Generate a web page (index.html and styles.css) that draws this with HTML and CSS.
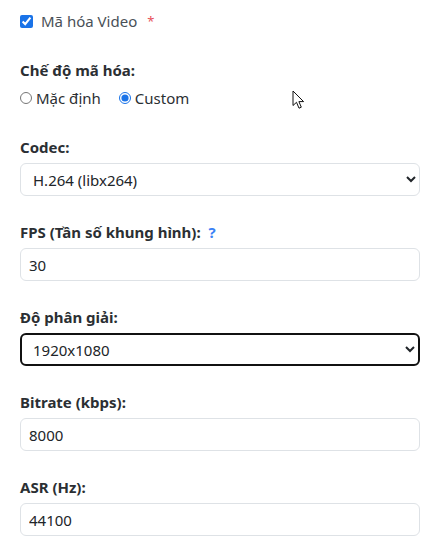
FILE: index.html
```html
<!DOCTYPE html>
<html lang="vi">
<head>
<meta charset="utf-8">
<title>Mã hóa Video</title>
<link rel="stylesheet" href="styles.css">
</head>
<body>
<form class="form">
  <label class="check-row">
    <input type="checkbox" class="check" checked>
    <span class="check-text">Mã hóa Video</span>
    <span class="req">*</span>
  </label>

  <div class="group">
    <div class="field-label mode-label">Chế độ mã hóa:</div>
    <div class="radio-row">
      <label class="radio-item"><input type="radio" name="mode" class="radio"><span>Mặc định</span></label>
      <label class="radio-item"><input type="radio" name="mode" class="radio" checked><span>Custom</span></label>
    </div>
  </div>

  <div class="group">
    <div class="field-label">Codec:</div>
    <select class="control select">
      <option>H.264 (libx264)</option>
    </select>
  </div>

  <div class="group">
    <div class="field-label">FPS (Tần số khung hình): <span class="help">?</span></div>
    <input class="control" type="text" value="30">
  </div>

  <div class="group">
    <div class="field-label">Độ phân giải:</div>
    <select class="control select focused">
      <option>1920x1080</option>
    </select>
  </div>

  <div class="group">
    <div class="field-label">Bitrate (kbps):</div>
    <input class="control" type="text" value="8000">
  </div>

  <div class="group">
    <div class="field-label">ASR (Hz):</div>
    <input class="control" type="text" value="44100">
  </div>
</form>

<svg class="cursor" width="13" height="20" viewBox="0 0 13 20" aria-hidden="true">
  <path d="M1 1 L1 15.5 L4.5 12.3 L7 18.2 L9.3 17.2 L6.9 11.6 L11.6 11.6 Z" fill="#fff" stroke="#111" stroke-width="1" stroke-linejoin="round"/>
</svg>
</body>
</html>
```

FILE: styles.css
```css
html, body {
  margin: 0;
  padding: 0;
  background: #ffffff;
}

body {
  position: relative;
  font-family: "Noto Sans", "Open Sans", sans-serif;
  font-size: 15px;
  color: #212529;
}

.form {
  width: 400px;
  padding: 10px 0 0 20px;
}

.check-row {
  display: flex;
  align-items: center;
  height: 22px;
  margin-bottom: 27px;
}

.check {
  width: 13px;
  height: 13px;
  margin: 0 8px 0 0;
  accent-color: #1a73e8;
}

.check-text {
  color: #495057;
}

.req {
  color: #e8505b;
  margin-left: 10px;
  font-size: 13px;
}

.group {
  margin-bottom: 25px;
}

.group:first-of-type {
  margin-bottom: 27px;
}

.field-label {
  font-weight: 700;
  line-height: 22px;
  margin-bottom: 5px;
  color: #2b2f33;
}

.mode-label {
  margin-bottom: 6px;
}

.help {
  color: #3b82f6;
  margin-left: 4px;
}

.radio-row {
  display: flex;
  align-items: center;
  height: 22px;
  gap: 18px;
  color: #2b2f33;
}

.radio-item {
  display: flex;
  align-items: center;
  gap: 4px;
}

.radio {
  width: 12px;
  height: 12px;
  margin: 0;
  accent-color: #1a73e8;
}

.control {
  display: block;
  box-sizing: border-box;
  width: 400px;
  height: 33px;
  margin: 0;
  padding: 0 8px;
  border: 1px solid #dee2e6;
  border-radius: 6px;
  background: #ffffff;
  font-family: "Noto Sans", "Open Sans", sans-serif;
  font-size: 15px;
  color: #212529;
  outline: none;
}

.select {
  padding: 0 6px 0 8px;
}

.focused {
  border: 2px solid #111111;
  padding: 0 5px 0 7px;
}

.cursor {
  position: absolute;
  left: 292px;
  top: 90px;
}
```
